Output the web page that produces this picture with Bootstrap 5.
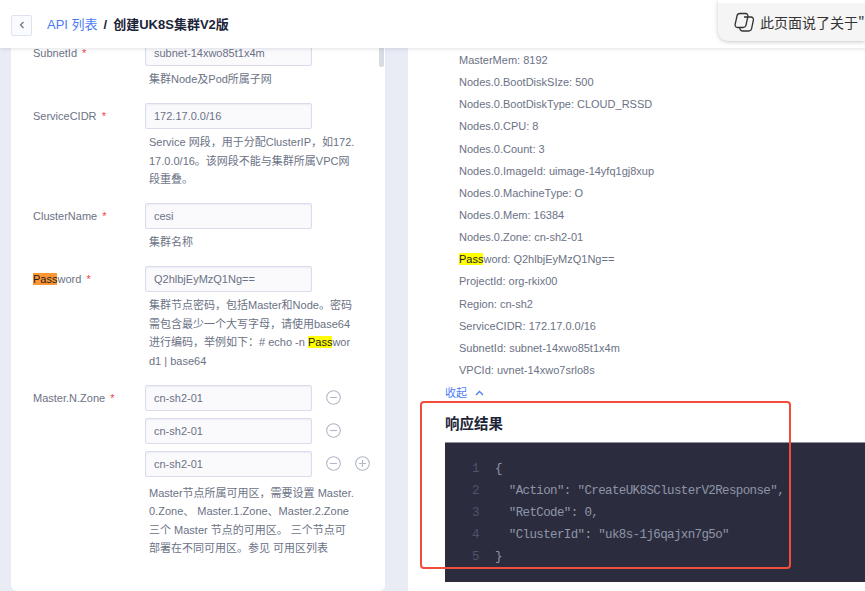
<!DOCTYPE html>
<html lang="zh"><head><meta charset="utf-8">
<link href="https://cdn.jsdelivr.net/npm/bootstrap@5.3.0/dist/css/bootstrap.min.css" rel="stylesheet">
<script src="https://cdn.jsdelivr.net/npm/bootstrap@5.3.0/dist/js/bootstrap.bundle.min.js"></script>
<style>
html,body{height:591px;overflow:hidden}
body{background:#e9ecf5;font-family:"Liberation Sans","Noto Sans CJK SC",sans-serif;color:#6b7285;font-size:11px;position:relative}
.topbar{height:48px;background:#fff;box-shadow:0 1px 4px rgba(40,50,80,.14);position:relative;z-index:2;padding:2px 0 0 11px}
.backbtn{width:21px;height:21px;border:1px solid #dfe3f0;border-radius:2px;background:#fafbfe;padding:0;color:#6b7285}
.crumb-link{color:#4c7bf4;font-size:13px;margin-left:15px}
.crumb-sep{color:#1c2438;font-size:13px;margin:0 6px;font-weight:700}
.crumb-now{color:#1c2438;font-size:13px;font-weight:700}
.workspace{height:543px}
.formpane{width:374px;margin-left:11px;background:#fff;border-radius:0 0 6px 6px;height:543px;position:relative;overflow:hidden;flex:none}
.formscroll{margin-top:-8px;padding-left:22px}
.scrollthumb{position:absolute;right:1px;top:0;width:5px;height:19px;background:#d9dbe2;border-radius:0 0 2px 2px}
.field{display:flex;margin-bottom:14.5px}
.fname{width:112px;flex:none;padding-top:5px;line-height:16px;color:#6b7285}
.fname b{color:#ef4444;font-weight:400;margin-left:2px}
.fbody{width:232px;flex:none}
.inp{width:167px;height:26px;flex:none;border:1px solid #d8dcec;background:#fafafd;border-radius:2px;padding:0 8px;line-height:24px;color:#6b7285;box-shadow:inset 0 1px 2px rgba(60,70,110,.07)}
.hint{margin:4px 0 0 4px;line-height:18.5px;color:#6b7285;white-space:nowrap}
.zonerow{display:flex;align-items:center;height:26px;margin-bottom:7px}
.zonerow .inp{margin-right:14px}
.zonerow svg{flex:none;margin-right:14px}
.zonerow + .hint{margin-top:1px}
.mark-y{background:#ffff00;color:#222}
.mark-o{background:#ff9632;color:#222}
.resultpane{width:457px;margin-left:23px;background:#fff;height:543px;flex:none;padding-left:37px;overflow:hidden}
.params{padding:1px 0 0 14px;margin:0;list-style:none}
.params li{height:22.15px;line-height:22px;color:#6b7285}
.collapser{color:#4c7bf4;font-size:11px;height:20px;line-height:14px;margin-top:2px;display:flex;align-items:center;gap:8px}
.restitle{font-size:14.5px;font-weight:700;color:#1c2438;margin:0;height:39px;line-height:24px;padding-top:9px}
.codeblock{background:#2b2d3e;height:140px;padding:15px 0 0 27px;font-family:"Liberation Mono",monospace;font-size:12.5px;letter-spacing:-.62px;color:#8f95a9;border-top:1px solid #8d90a0}
.codeline{display:flex;height:22.1px;line-height:22px;white-space:pre}
.lnum{width:23px;color:#4e5370;flex:none}
.redframe{position:absolute;left:420px;top:401px;width:371px;height:168px;border:2.5px solid #f44c3c;border-radius:4px;z-index:3}
.copilot{position:absolute;top:0;right:0;width:147px;height:41px;background:#f5f5f5;border-radius:0 0 0 10px;box-shadow:0 1px 4px rgba(0,0,0,.22);z-index:4;border-top:3px solid #fff;font-size:14px;color:#333;white-space:nowrap;overflow:hidden;padding-left:15px;display:flex;align-items:center;gap:5px;font-family:"Noto Sans CJK SC",sans-serif}
.copilot svg{flex:none}
</style></head>
<body>
<header class="topbar d-flex align-items-center">
  <button class="backbtn d-flex align-items-center justify-content-center" aria-label="返回"><svg width="6" height="8" viewBox="0 0 6 8"><path d="M4.5 1 1.5 4l3 3" fill="none" stroke="#6b7285" stroke-width="1.2"/></svg></button>
  <span class="crumb-link">API 列表</span><span class="crumb-sep">/</span><span class="crumb-now">创建UK8S集群V2版</span>
</header>
<div class="copilot">
  <svg width="22" height="20" viewBox="0 0 22 20" fill="none" stroke="#333" stroke-width="1.3"><path d="M7 1.500h5.500a2.500 2.500 0 0 1 2.400 3l-1.900 8.500a3 3 0 0 1-3 2.500H4.500a2.500 2.500 0 0 1-2.400-3l1.900-8.500A3 3 0 0 1 7 1.500z"/><path d="M11 5h7a2.500 2.500 0 0 1 2.400 3l-1.800 8.500a3 3 0 0 1-3 2.500H9.500a2.500 2.500 0 0 1-2.400-3.500"/></svg>
  <span>此页面说了关于"p</span>
</div>
<main class="workspace d-flex">
  <section class="formpane">
    <div class="formscroll">
      <div class="field"><div class="fname">SubnetId <b>*</b></div><div class="fbody"><div class="inp">subnet-14xwo85t1x4m</div><p class="hint">集群Node及Pod所属子网</p></div></div>
      <div class="field"><div class="fname">ServiceCIDR <b>*</b></div><div class="fbody"><div class="inp">172.17.0.0/16</div><p class="hint">Service 网段，用于分配ClusterIP，如172.<br>17.0.0/16。该网段不能与集群所属VPC网<br>段重叠。</p></div></div>
      <div class="field"><div class="fname">ClusterName <b>*</b></div><div class="fbody"><div class="inp">cesi</div><p class="hint">集群名称</p></div></div>
      <div class="field"><div class="fname"><span class="mark-o">Pass</span>word <b>*</b></div><div class="fbody"><div class="inp">Q2hlbjEyMzQ1Ng==</div><p class="hint">集群节点密码，包括Master和Node。密码<br>需包含最少一个大写字母，请使用base64<br>进行编码，举例如下：# echo -n <span class="mark-y">Pass</span>wor<br>d1 | base64</p></div></div>
      <div class="field"><div class="fname">Master.N.Zone <b>*</b></div><div class="fbody">
        <div class="zonerow"><div class="inp">cn-sh2-01</div><svg width="15" height="15" viewBox="0 0 15 15" fill="none" stroke="#b4b8c6" stroke-width="1.100"><circle cx="7.500" cy="7.500" r="6.800"/><path d="M4 7.500h7"/></svg></div>
        <div class="zonerow"><div class="inp">cn-sh2-01</div><svg width="15" height="15" viewBox="0 0 15 15" fill="none" stroke="#b4b8c6" stroke-width="1.100"><circle cx="7.500" cy="7.500" r="6.800"/><path d="M4 7.500h7"/></svg></div>
        <div class="zonerow"><div class="inp">cn-sh2-01</div><svg width="15" height="15" viewBox="0 0 15 15" fill="none" stroke="#b4b8c6" stroke-width="1.100"><circle cx="7.500" cy="7.500" r="6.800"/><path d="M4 7.500h7"/></svg><svg width="15" height="15" viewBox="0 0 15 15" fill="none" stroke="#b4b8c6" stroke-width="1.100"><circle cx="7.500" cy="7.500" r="6.800"/><path d="M4 7.500h7M7.500 4v7"/></svg></div>
        <p class="hint">Master节点所属可用区，需要设置 Master.<br>0.Zone、 Master.1.Zone、Master.2.Zone<br>三个 Master 节点的可用区。 三个节点可<br>部署在不同可用区。参见 可用区列表</p>
      </div></div>
    </div>
    <div class="scrollthumb"></div>
  </section>
  <section class="resultpane">
    <ul class="params">
      <li>MasterMem: 8192</li>
      <li>Nodes.0.BootDiskSIze: 500</li>
      <li>Nodes.0.BootDiskType: CLOUD_RSSD</li>
      <li>Nodes.0.CPU: 8</li>
      <li>Nodes.0.Count: 3</li>
      <li>Nodes.0.ImageId: uimage-14yfq1gj8xup</li>
      <li>Nodes.0.MachineType: O</li>
      <li>Nodes.0.Mem: 16384</li>
      <li>Nodes.0.Zone: cn-sh2-01</li>
      <li><span class="mark-y">Pass</span>word: Q2hlbjEyMzQ1Ng==</li>
      <li>ProjectId: org-rkix00</li>
      <li>Region: cn-sh2</li>
      <li>ServiceCIDR: 172.17.0.0/16</li>
      <li>SubnetId: subnet-14xwo85t1x4m</li>
      <li>VPCId: uvnet-14xwo7srlo8s</li>
    </ul>
    <div class="collapser"><span>收起</span><svg width="9" height="6" viewBox="0 0 9 6"><path d="M1 5l3.500-3.500L8 5" fill="none" stroke="#4c7bf4" stroke-width="1.300"/></svg></div>
    <h2 class="restitle">响应结果</h2>
    <div class="codeblock">
      <div class="codeline"><span class="lnum">1</span><span>{</span></div>
      <div class="codeline"><span class="lnum">2</span><span>  "Action": "CreateUK8SClusterV2Response",</span></div>
      <div class="codeline"><span class="lnum">3</span><span>  "RetCode": 0,</span></div>
      <div class="codeline"><span class="lnum">4</span><span>  "ClusterId": "uk8s-1j6qajxn7g5o"</span></div>
      <div class="codeline"><span class="lnum">5</span><span>}</span></div>
    </div>
  </section>
</main>
<div class="redframe"></div>
</body></html>
